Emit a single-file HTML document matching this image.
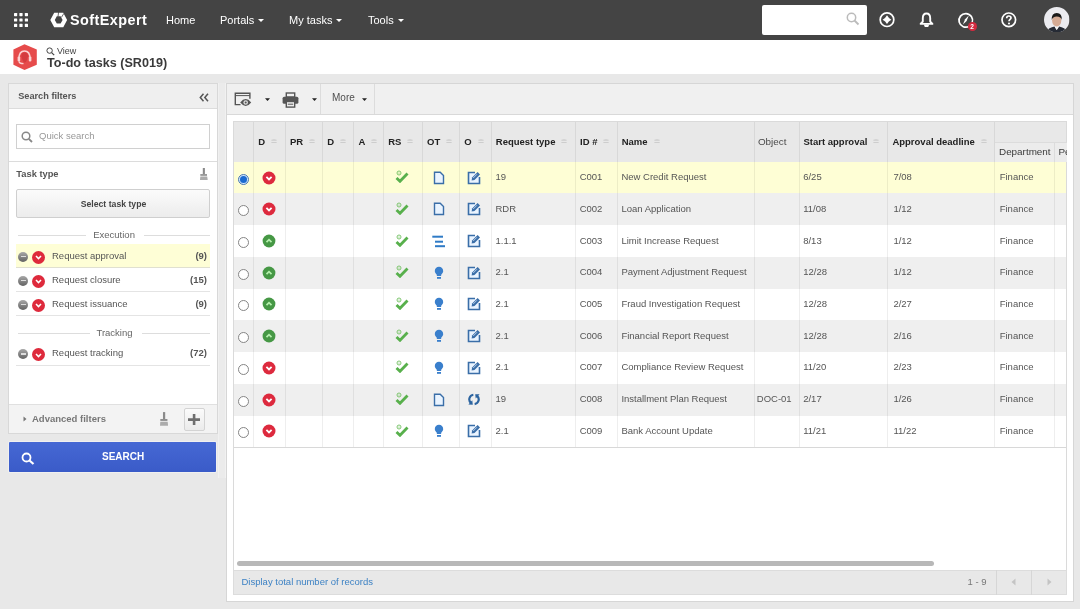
<!DOCTYPE html>
<html><head><meta charset="utf-8">
<style>
*{box-sizing:border-box;margin:0;padding:0}
html,body{width:1080px;height:609px;overflow:hidden}
body{background:#e8e8e8;font-family:"Liberation Sans",sans-serif;color:#555;font-size:9.5px;position:relative}
.abs{position:absolute}
#nav{left:0;top:0;width:1080px;height:40px;background:#444}
#nav .mi{position:absolute;top:13px;color:#fff;font-size:11px;line-height:14px}
.caret{display:inline-block;width:0;height:0;border-left:3.5px solid transparent;border-right:3.5px solid transparent;border-top:3.5px solid #fff;vertical-align:middle;margin-left:4px;margin-top:-2px}
#hdr{left:0;top:40px;width:1080px;height:34px;background:#fff}
.panel{background:#fff;border:1px solid #d8d8d8}
</style></head><body>
<div id="root" style="position:absolute;left:0;top:0;width:1080px;height:609px;will-change:transform">
<div id="nav" class="abs">
  <!-- grid icon -->
  <svg class="abs" style="left:13px;top:11.5px" width="16" height="16" viewBox="0 0 16 16">
    <g fill="#fff">
      <rect x="1" y="1" width="3.2" height="3.2" rx=".6"/><rect x="6.4" y="1" width="3.2" height="3.2" rx=".6"/><rect x="11.8" y="1" width="3.2" height="3.2" rx=".6"/>
      <rect x="1" y="6.4" width="3.2" height="3.2" rx=".6"/><rect x="6.4" y="6.4" width="3.2" height="3.2" rx=".6"/><rect x="11.8" y="6.4" width="3.2" height="3.2" rx=".6"/>
      <rect x="1" y="11.8" width="3.2" height="3.2" rx=".6"/><rect x="6.4" y="11.8" width="3.2" height="3.2" rx=".6"/><rect x="11.8" y="11.8" width="3.2" height="3.2" rx=".6"/>
    </g>
  </svg>
  <!-- logo -->
  <svg class="abs" style="left:49px;top:11px" width="19" height="18" viewBox="0 0 19 18">
    <path d="M5.2 1.7 L14.3 1.7 L18.1 9 L14.3 16.3 L5.2 16.3 L1.3 9 Z M7.8 5.2 L5.8 8.9 L7.8 12.5 L11.6 12.5 L13.6 8.9 L11.6 5.2 Z" fill="#fff" fill-rule="evenodd"/>
    <path d="M9.6 1 L9 5.6 M14.9 2.4 L12.4 6.4" stroke="#444" stroke-width="0.8"/>
  </svg>
  <div class="abs" style="left:70px;top:12.3px;color:#fff;font-weight:bold;font-size:14.4px;line-height:17px;letter-spacing:0.45px">SoftExpert</div>
  <div class="mi" style="left:166px">Home</div>
  <div class="mi" style="left:220px">Portals<span class="caret"></span></div>
  <div class="mi" style="left:289px">My tasks<span class="caret"></span></div>
  <div class="mi" style="left:368px">Tools<span class="caret"></span></div>
  <!-- search box -->
  <div class="abs" style="left:762px;top:5px;width:105px;height:30px;background:#fff;border-radius:2px"></div>
  <svg class="abs" style="left:846px;top:12px" width="14" height="14" viewBox="0 0 14 14"><circle cx="5.5" cy="5.5" r="4.2" fill="none" stroke="#bbb" stroke-width="1.5"/><path d="M8.5 8.5 L12.5 12.5" stroke="#bbb" stroke-width="1.8"/></svg>
  <!-- icons -->
  <svg class="abs" style="left:878px;top:11px" width="18" height="18" viewBox="0 0 18 18"><circle cx="9" cy="8.7" r="6.8" fill="none" stroke="#fff" stroke-width="1.7"/><path d="M9 4.3 Q10.5 7.2 13.4 8.7 Q10.5 10.2 9 13.1 Q7.5 10.2 4.6 8.7 Q7.5 7.2 9 4.3 Z" fill="#fff"/></svg>
  <svg class="abs" style="left:918px;top:11px" width="17" height="18" viewBox="0 0 17 18"><path d="M8.5 2.5 C5.7 2.5 4.8 4.6 4.8 7.2 L4.8 10.5 L2.6 12.9 L14.4 12.9 L12.2 10.5 L12.2 7.2 C12.2 4.6 11.3 2.5 8.5 2.5 Z" fill="none" stroke="#fff" stroke-width="1.9" stroke-linejoin="round"/><path d="M5.8 13.5 L11.2 13.5 L10.2 16 L6.8 16 Z" fill="#fff"/></svg>
  <svg class="abs" style="left:957px;top:10.5px" width="18" height="18" viewBox="0 0 18 18"><path d="M12.3 15.2 A6.8 6.8 0 1 1 15.2 11.6" fill="none" stroke="#fff" stroke-width="1.7"/><path d="M11.8 4.5 L9.6 9.9 L5.9 13.5 L8.1 8.2 Z" fill="#fff"/></svg>
  <div class="abs" style="left:967.5px;top:21.8px;width:9px;height:9px;border-radius:50%;background:#d42a3f;color:#fff;font-size:6.5px;font-weight:bold;line-height:9px;text-align:center">2</div>
  <svg class="abs" style="left:1000px;top:10.5px" width="18" height="18" viewBox="0 0 18 18"><circle cx="8.8" cy="8.8" r="6.8" fill="none" stroke="#fff" stroke-width="1.7"/><path d="M6.7 7.2 C6.7 5.8 7.6 5 8.8 5 C10.1 5 11 5.8 11 6.9 C11 8.3 9 8.6 9 10.2" fill="none" stroke="#fff" stroke-width="1.7"/><circle cx="9" cy="12.5" r="1.05" fill="#fff"/></svg>
  <svg class="abs" style="left:1044.3px;top:6.6px" width="25.5" height="25.5" viewBox="0 0 25.5 25.5">
    <defs><clipPath id="av"><circle cx="12.75" cy="12.75" r="12.75"/></clipPath></defs>
    <g clip-path="url(#av)">
      <rect width="25.5" height="25.5" fill="#ebebf0"/>
      <path d="M3 25.5 L5 21.5 Q8 20 10.5 19.5 L12.7 23 L15 19.5 Q17.5 20 20.5 21.5 L22.5 25.5 Z" fill="#262b35"/>
      <path d="M10.5 19.5 L12.7 23 L15 19.5 Z" fill="#f4f4f4"/>
      <ellipse cx="12.7" cy="13.6" rx="4.6" ry="6" fill="#d5ab95"/>
      <path d="M7.7 13 Q7.3 6.2 12.8 6 Q18.2 6.2 17.8 13 Q17 9.6 12.8 9.4 Q8.6 9.6 7.7 13 Z" fill="#1a1a1a"/>
    </g>
  </svg>
</div>

<div id="hdr" class="abs">
  <svg class="abs" style="left:12px;top:4px" width="26" height="28" viewBox="0 0 26 28">
    <path d="M12.5 0.2 L24.8 5.4 L24.8 20.7 L12.5 26.1 L1.4 20.7 L1.4 5.4 Z" fill="#e64b4b"/>
    <path d="M12.7 8.5 C10 8.5 8.6 10.5 9.8 14 C10.5 16.5 11.5 18.5 12.7 18.5 C13.9 18.5 14.9 16.5 15.6 14 C16.8 10.5 15.4 8.5 12.7 8.5 Z" fill="#d43c3f"/>
    <path d="M7 14.5 C7 9.5 9.3 7 12.5 7 C15.7 7 18 9.5 18 14.5" fill="none" stroke="#fbd3d3" stroke-width="1.5"/>
    <rect x="5.6" y="12.5" width="2.6" height="5" rx="1" fill="#fbd3d3"/>
    <rect x="16.8" y="12.5" width="2.6" height="5" rx="1" fill="#fbd3d3"/>
    <path d="M7 17.5 Q7.5 19.6 11.5 19.6" fill="none" stroke="#fbd3d3" stroke-width="1.3"/>
  </svg>
  <svg class="abs" style="left:46px;top:6.7px" width="9" height="9" viewBox="0 0 9 9"><circle cx="3.6" cy="3.6" r="2.7" fill="none" stroke="#444" stroke-width="1"/><path d="M5.6 5.6 L8.2 8.2" stroke="#444" stroke-width="1.2"/></svg>
  <div class="abs" style="left:57px;top:5.7px;font-size:9px;line-height:11px;color:#444">View</div>
  <div class="abs" style="left:47px;top:15.5px;font-size:12.6px;line-height:15px;font-weight:bold;color:#3a3a3a">To-do tasks (SR019)</div>
</div>

<!-- left panel -->
<div class="abs panel" style="left:8px;top:83px;width:210px;height:351px;">
  <div class="abs" style="left:0;top:0;width:208px;height:25px;background:#efefef;border-bottom:1px solid #dcdcdc"></div>
  <div class="abs b" style="left:9.2px;top:6.2px;font-size:9.2px;line-height:12px;font-weight:bold;color:#555">Search filters</div>
  <svg class="abs" style="left:189.5px;top:8.6px" width="10" height="9" viewBox="0 0 10 9"><path d="M4.5 0.8 L1.3 4.5 L4.5 8.2 M9 0.8 L5.8 4.5 L9 8.2" fill="none" stroke="#555" stroke-width="1.5"/></svg>
  <div class="abs" style="left:7px;top:39.5px;width:194px;height:25px;border:1px solid #d0d0d0;background:#fff"></div>
  <svg class="abs" style="left:12px;top:47px" width="13" height="12" viewBox="0 0 13 12"><circle cx="5" cy="5" r="3.8" fill="none" stroke="#888" stroke-width="1.5"/><path d="M7.8 7.8 L11 11" stroke="#888" stroke-width="1.8"/></svg>
  <div class="abs" style="left:30px;top:46px;font-size:9.5px;line-height:12px;color:#999">Quick search</div>
  <div class="abs" style="left:0;top:77px;width:208px;height:1px;background:#dcdcdc"></div>
  <div class="abs" style="left:7.3px;top:84.2px;font-size:9.3px;line-height:12px;font-weight:bold;color:#555">Task type</div>
  <svg class="abs" style="left:191px;top:84px" width="8" height="12" viewBox="0 0 8 12"><rect x="2.8" y="0" width="2.1" height="6.1" fill="#8a8a8a"/><rect x="0.3" y="6.1" width="6.7" height="1.7" fill="#8f8f8f"/><path d="M0.3 8.4 L7.2 8.4 L7.7 11.9 L0 11.9 Z" fill="#acacac"/></svg>
  <div class="abs" style="left:7px;top:105px;width:194px;height:29px;border:1px solid #cfcfcf;border-radius:2px;background:linear-gradient(#fbfbfb,#ececec)"></div>
  <div class="abs" style="left:0;top:113.5px;width:209px;text-align:center;font-size:8.7px;line-height:12px;font-weight:bold;color:#444">Select task type</div>
  <div class="abs" style="left:9px;top:151px;width:68px;height:1px;background:#ddd"></div>
  <div class="abs" style="left:135px;top:151px;width:66px;height:1px;background:#ddd"></div>
  <div class="abs" style="left:0.6px;top:145.2px;width:209px;text-align:center;font-size:9.5px;line-height:12px;color:#666">Execution</div>
  <div class="abs" style="left:7px;top:160px;width:194px;height:23.5px;background:#fefed6;border-bottom:1px solid #e0e0d0"></div>
  <div class="abs" style="left:7px;top:183.5px;width:194px;height:24px;border-bottom:1px solid #e4e4e4"></div>
  <div class="abs" style="left:7px;top:207.5px;width:194px;height:24px;border-bottom:1px solid #e4e4e4"></div>
  <div class="abs" style="left:1px;top:243px;width:209px;text-align:center;font-size:9.5px;line-height:12px;color:#666">Tracking</div>
  <div class="abs" style="left:9px;top:248.5px;width:72px;height:1px;background:#ddd"></div>
  <div class="abs" style="left:133px;top:248.5px;width:68px;height:1px;background:#ddd"></div>
  <div class="abs" style="left:7px;top:258px;width:194px;height:24px;border-bottom:1px solid #e4e4e4"></div>
  <div class="abs" style="left:9px;top:167.8px;width:10px;height:10px;border-radius:50%;background:linear-gradient(#a8a8a8,#626262)"></div>
  <div class="abs" style="left:11.5px;top:171.9px;width:5px;height:1.3px;background:#ddd"></div>
  <div class="abs" style="left:23px;top:166.6px;width:13px;height:13px;border-radius:50%;background:#de2a3c"></div>
  <svg class="abs" style="left:26px;top:171.1px" width="7" height="5" viewBox="0 0 7 5"><path d="M1 1 L3.5 3.6 L6 1" fill="none" stroke="#fff" stroke-width="1.5"/></svg>
  <div class="abs" style="left:43px;top:165.8px;font-size:9.5px;line-height:12px;color:#555">Request approval</div>
  <div class="abs" style="left:150px;width:48px;text-align:right;top:165.8px;font-size:9.5px;line-height:12px;font-weight:bold;color:#555">(9)</div>
  <div class="abs" style="left:9px;top:191.8px;width:10px;height:10px;border-radius:50%;background:linear-gradient(#a8a8a8,#626262)"></div>
  <div class="abs" style="left:11.5px;top:195.9px;width:5px;height:1.3px;background:#ddd"></div>
  <div class="abs" style="left:23px;top:190.6px;width:13px;height:13px;border-radius:50%;background:#de2a3c"></div>
  <svg class="abs" style="left:26px;top:195.1px" width="7" height="5" viewBox="0 0 7 5"><path d="M1 1 L3.5 3.6 L6 1" fill="none" stroke="#fff" stroke-width="1.5"/></svg>
  <div class="abs" style="left:43px;top:189.8px;font-size:9.5px;line-height:12px;color:#555">Request closure</div>
  <div class="abs" style="left:150px;width:48px;text-align:right;top:189.8px;font-size:9.5px;line-height:12px;font-weight:bold;color:#555">(15)</div>
  <div class="abs" style="left:9px;top:215.8px;width:10px;height:10px;border-radius:50%;background:linear-gradient(#a8a8a8,#626262)"></div>
  <div class="abs" style="left:11.5px;top:219.9px;width:5px;height:1.3px;background:#ddd"></div>
  <div class="abs" style="left:23px;top:214.6px;width:13px;height:13px;border-radius:50%;background:#de2a3c"></div>
  <svg class="abs" style="left:26px;top:219.1px" width="7" height="5" viewBox="0 0 7 5"><path d="M1 1 L3.5 3.6 L6 1" fill="none" stroke="#fff" stroke-width="1.5"/></svg>
  <div class="abs" style="left:43px;top:213.8px;font-size:9.5px;line-height:12px;color:#555">Request issuance</div>
  <div class="abs" style="left:150px;width:48px;text-align:right;top:213.8px;font-size:9.5px;line-height:12px;font-weight:bold;color:#555">(9)</div>
  <div class="abs" style="left:9px;top:265.2px;width:10px;height:10px;border-radius:50%;background:linear-gradient(#a8a8a8,#626262)"></div>
  <div class="abs" style="left:11.5px;top:269.4px;width:5px;height:1.3px;background:#ddd"></div>
  <div class="abs" style="left:23px;top:264.1px;width:13px;height:13px;border-radius:50%;background:#de2a3c"></div>
  <svg class="abs" style="left:26px;top:268.6px" width="7" height="5" viewBox="0 0 7 5"><path d="M1 1 L3.5 3.6 L6 1" fill="none" stroke="#fff" stroke-width="1.5"/></svg>
  <div class="abs" style="left:43px;top:263.2px;font-size:9.5px;line-height:12px;color:#555">Request tracking</div>
  <div class="abs" style="left:150px;width:48px;text-align:right;top:263.2px;font-size:9.5px;line-height:12px;font-weight:bold;color:#555">(72)</div>
  
  <div class="abs" style="left:0;top:319.5px;width:208px;height:29.5px;background:#f3f3f3;border-top:1px solid #e0e0e0"></div>
  <svg class="abs" style="left:14px;top:332px" width="4" height="6" viewBox="0 0 4 6"><path d="M0.5 0.5 L3.5 3 L0.5 5.5 Z" fill="#777"/></svg>
  <div class="abs" style="left:23px;top:329px;font-size:9.5px;line-height:12px;font-weight:bold;color:#777">Advanced filters</div>
  <svg class="abs" style="left:150.8px;top:327.8px" width="8.5" height="14" viewBox="0 0 8 13"><rect x="2.8" y="0" width="2.1" height="6.5" fill="#8a8a8a"/><rect x="0.3" y="6.5" width="6.7" height="1.8" fill="#8f8f8f"/><path d="M0.3 9 L7.2 9 L7.7 12.9 L0 12.9 Z" fill="#acacac"/></svg>
  <div class="abs" style="left:174.5px;top:324.2px;width:21.5px;height:22.5px;border:1px solid #d3d3d3;border-radius:2px;background:linear-gradient(#fbfbfb,#ebebeb)"></div>
  <svg class="abs" style="left:179px;top:329.8px" width="12.2" height="11.2" viewBox="0 0 12.2 11.2"><path d="M6.1 0 L6.1 11.2 M0 5.6 L12.2 5.6" stroke="#6f6f6f" stroke-width="2.6"/></svg>
</div>
<div class="abs" style="left:8.8px;top:442.3px;width:207.4px;height:29.8px;background:linear-gradient(#4668d4,#3a5bc8);border-radius:1px;box-shadow:0 0 0 1px rgba(255,255,255,.35)"></div>
<svg class="abs" style="left:21px;top:452px" width="14" height="13" viewBox="0 0 14 13"><circle cx="5.5" cy="5.5" r="4" fill="none" stroke="#fff" stroke-width="1.8"/><path d="M8.5 8.5 L12.5 12" stroke="#fff" stroke-width="2.2"/></svg>
<div class="abs" style="left:102px;top:451px;font-size:10px;line-height:12px;font-weight:bold;color:#fff">SEARCH</div>

<!-- right panel -->
<div class="abs" style="left:218px;top:83px;width:8px;height:395px;background:#ebebeb;border-left:1px solid #f0f0f0;border-right:1px solid #f1f1f1"></div>
<div class="abs" style="left:226px;top:83px;width:848px;height:519px;background:#fff;border:1px solid #d6d6d6"></div>
<div class="abs" style="left:227px;top:84px;width:846px;height:30.5px;background:#f0f0f0;border-bottom:1px solid #d9d9d9"></div>
<div class="abs" style="left:320px;top:84px;width:1px;height:30px;background:#dcdcdc"></div>
<div class="abs" style="left:374.3px;top:84px;width:1px;height:30px;background:#dcdcdc"></div>
<svg class="abs" style="left:234px;top:92px" width="18" height="15" viewBox="0 0 18 15"><path d="M6.5 12.6 L1.3 12.6 L1.3 1.2 L15.9 1.2 L15.9 6.8" fill="none" stroke="#555" stroke-width="1.4"/><path d="M1.3 3.6 L15.9 3.6" stroke="#555" stroke-width="1"/><path d="M6.2 10.5 Q11.7 3.6 17.2 10.5 Q11.7 17.4 6.2 10.5 Z" fill="#555"/><circle cx="11.7" cy="10.5" r="2.3" fill="#dedede"/><circle cx="11.7" cy="10.5" r="1" fill="#555"/></svg>
<svg class="abs" style="left:264.7px;top:97.7px" width="5" height="3" viewBox="0 0 5 3"><path d="M0 0.2 L5 0.2 L2.5 3 Z" fill="#222"/></svg>
<svg class="abs" style="left:282px;top:92px" width="17" height="16" viewBox="0 0 17 16"><rect x="4.3" y="1" width="8.4" height="4" fill="none" stroke="#555" stroke-width="1.4"/><rect x="0.6" y="4.8" width="15.8" height="7" rx="1.5" fill="#555"/><rect x="4.3" y="9.5" width="8.4" height="5.6" fill="#eee" stroke="#555" stroke-width="1.4"/><rect x="5.8" y="11.7" width="5.4" height="1" fill="#555"/></svg>
<svg class="abs" style="left:311.8px;top:97.7px" width="5" height="3" viewBox="0 0 5 3"><path d="M0 0.2 L5 0.2 L2.5 3 Z" fill="#222"/></svg>
<div class="abs" style="left:332px;top:92.2px;font-size:10px;line-height:12px;color:#505050">More</div>
<svg class="abs" style="left:361.5px;top:97.5px" width="5" height="3" viewBox="0 0 5 3"><path d="M0 0.2 L5 0.2 L2.5 3 Z" fill="#222"/></svg>
<div class="abs" style="left:233px;top:121px;width:834px;height:448.5px;background:#fff;border:1px solid #dadada;border-bottom:none"></div>
<div class="abs" style="left:234px;top:122px;width:832px;height:39.7px;background:#e8e8e8"></div>
<div class="abs" style="left:994.5px;top:141.5px;width:72px;height:20.2px;background:#ececec;border-top:1px solid #dcdcdc"></div>
<div class="abs" style="left:234px;top:161.7px;width:832px;height:31.73px;background:#fefed5"></div>
<div class="abs" style="left:234px;top:193.43px;width:832px;height:31.73px;background:#efefef"></div>
<div class="abs" style="left:234px;top:225.16px;width:832px;height:31.73px;background:#fff"></div>
<div class="abs" style="left:234px;top:256.89px;width:832px;height:31.73px;background:#efefef"></div>
<div class="abs" style="left:234px;top:288.62px;width:832px;height:31.73px;background:#fff"></div>
<div class="abs" style="left:234px;top:320.35px;width:832px;height:31.73px;background:#efefef"></div>
<div class="abs" style="left:234px;top:352.08px;width:832px;height:31.73px;background:#fff"></div>
<div class="abs" style="left:234px;top:383.81px;width:832px;height:31.73px;background:#efefef"></div>
<div class="abs" style="left:234px;top:415.54px;width:832px;height:31.73px;background:#fff"></div>
<div class="abs" style="left:234px;top:447.27px;width:832px;height:1px;background:#d8d8d8"></div>
<div class="abs" style="left:253.3px;top:122px;width:1px;height:325.27px;background:rgba(0,0,0,0.065)"></div>
<div class="abs" style="left:285px;top:122px;width:1px;height:325.27px;background:rgba(0,0,0,0.065)"></div>
<div class="abs" style="left:322.3px;top:122px;width:1px;height:325.27px;background:rgba(0,0,0,0.065)"></div>
<div class="abs" style="left:353.4px;top:122px;width:1px;height:325.27px;background:rgba(0,0,0,0.065)"></div>
<div class="abs" style="left:383.2px;top:122px;width:1px;height:325.27px;background:rgba(0,0,0,0.065)"></div>
<div class="abs" style="left:422px;top:122px;width:1px;height:325.27px;background:rgba(0,0,0,0.065)"></div>
<div class="abs" style="left:459.2px;top:122px;width:1px;height:325.27px;background:rgba(0,0,0,0.065)"></div>
<div class="abs" style="left:490.8px;top:122px;width:1px;height:325.27px;background:rgba(0,0,0,0.065)"></div>
<div class="abs" style="left:575px;top:122px;width:1px;height:325.27px;background:rgba(0,0,0,0.065)"></div>
<div class="abs" style="left:616.7px;top:122px;width:1px;height:325.27px;background:rgba(0,0,0,0.065)"></div>
<div class="abs" style="left:753.6px;top:122px;width:1px;height:325.27px;background:rgba(0,0,0,0.065)"></div>
<div class="abs" style="left:798.5px;top:122px;width:1px;height:325.27px;background:rgba(0,0,0,0.065)"></div>
<div class="abs" style="left:887.4px;top:122px;width:1px;height:325.27px;background:rgba(0,0,0,0.065)"></div>
<div class="abs" style="left:994px;top:122px;width:1px;height:325.27px;background:rgba(0,0,0,0.065)"></div>
<div class="abs" style="left:1053.8px;top:142.5px;width:1px;height:304.77px;background:rgba(0,0,0,0.065)"></div>
<div class="abs" style="left:258.3px;top:135.7px;font-size:9.5px;line-height:12px;font-weight:bold;color:#222;white-space:nowrap">D<svg style="margin-left:6px;vertical-align:0.5px" width="6" height="5" viewBox="0 0 6 5"><path d="M0.4 1.3 Q3 -0.2 5.6 1.3 Z" fill="#c2c2c2"/><path d="M0.4 3.2 Q3 4.7 5.6 3.2 Z" fill="#c2c2c2"/><rect x="0.4" y="0.7" width="5.2" height="1" fill="#cdcdcd"/><rect x="0.4" y="3" width="5.2" height="1" fill="#cdcdcd"/></svg></div>
<div class="abs" style="left:290px;top:135.7px;font-size:9.5px;line-height:12px;font-weight:bold;color:#222;white-space:nowrap">PR<svg style="margin-left:6px;vertical-align:0.5px" width="6" height="5" viewBox="0 0 6 5"><path d="M0.4 1.3 Q3 -0.2 5.6 1.3 Z" fill="#c2c2c2"/><path d="M0.4 3.2 Q3 4.7 5.6 3.2 Z" fill="#c2c2c2"/><rect x="0.4" y="0.7" width="5.2" height="1" fill="#cdcdcd"/><rect x="0.4" y="3" width="5.2" height="1" fill="#cdcdcd"/></svg></div>
<div class="abs" style="left:327.3px;top:135.7px;font-size:9.5px;line-height:12px;font-weight:bold;color:#222;white-space:nowrap">D<svg style="margin-left:6px;vertical-align:0.5px" width="6" height="5" viewBox="0 0 6 5"><path d="M0.4 1.3 Q3 -0.2 5.6 1.3 Z" fill="#c2c2c2"/><path d="M0.4 3.2 Q3 4.7 5.6 3.2 Z" fill="#c2c2c2"/><rect x="0.4" y="0.7" width="5.2" height="1" fill="#cdcdcd"/><rect x="0.4" y="3" width="5.2" height="1" fill="#cdcdcd"/></svg></div>
<div class="abs" style="left:358.4px;top:135.7px;font-size:9.5px;line-height:12px;font-weight:bold;color:#222;white-space:nowrap">A<svg style="margin-left:6px;vertical-align:0.5px" width="6" height="5" viewBox="0 0 6 5"><path d="M0.4 1.3 Q3 -0.2 5.6 1.3 Z" fill="#c2c2c2"/><path d="M0.4 3.2 Q3 4.7 5.6 3.2 Z" fill="#c2c2c2"/><rect x="0.4" y="0.7" width="5.2" height="1" fill="#cdcdcd"/><rect x="0.4" y="3" width="5.2" height="1" fill="#cdcdcd"/></svg></div>
<div class="abs" style="left:388.2px;top:135.7px;font-size:9.5px;line-height:12px;font-weight:bold;color:#222;white-space:nowrap">RS<svg style="margin-left:6px;vertical-align:0.5px" width="6" height="5" viewBox="0 0 6 5"><path d="M0.4 1.3 Q3 -0.2 5.6 1.3 Z" fill="#c2c2c2"/><path d="M0.4 3.2 Q3 4.7 5.6 3.2 Z" fill="#c2c2c2"/><rect x="0.4" y="0.7" width="5.2" height="1" fill="#cdcdcd"/><rect x="0.4" y="3" width="5.2" height="1" fill="#cdcdcd"/></svg></div>
<div class="abs" style="left:427px;top:135.7px;font-size:9.5px;line-height:12px;font-weight:bold;color:#222;white-space:nowrap">OT<svg style="margin-left:6px;vertical-align:0.5px" width="6" height="5" viewBox="0 0 6 5"><path d="M0.4 1.3 Q3 -0.2 5.6 1.3 Z" fill="#c2c2c2"/><path d="M0.4 3.2 Q3 4.7 5.6 3.2 Z" fill="#c2c2c2"/><rect x="0.4" y="0.7" width="5.2" height="1" fill="#cdcdcd"/><rect x="0.4" y="3" width="5.2" height="1" fill="#cdcdcd"/></svg></div>
<div class="abs" style="left:464.2px;top:135.7px;font-size:9.5px;line-height:12px;font-weight:bold;color:#222;white-space:nowrap">O<svg style="margin-left:6px;vertical-align:0.5px" width="6" height="5" viewBox="0 0 6 5"><path d="M0.4 1.3 Q3 -0.2 5.6 1.3 Z" fill="#c2c2c2"/><path d="M0.4 3.2 Q3 4.7 5.6 3.2 Z" fill="#c2c2c2"/><rect x="0.4" y="0.7" width="5.2" height="1" fill="#cdcdcd"/><rect x="0.4" y="3" width="5.2" height="1" fill="#cdcdcd"/></svg></div>
<div class="abs" style="left:495.8px;top:135.7px;font-size:9.5px;line-height:12px;font-weight:bold;color:#222;white-space:nowrap">Request type<svg style="margin-left:6px;vertical-align:0.5px" width="6" height="5" viewBox="0 0 6 5"><path d="M0.4 1.3 Q3 -0.2 5.6 1.3 Z" fill="#c2c2c2"/><path d="M0.4 3.2 Q3 4.7 5.6 3.2 Z" fill="#c2c2c2"/><rect x="0.4" y="0.7" width="5.2" height="1" fill="#cdcdcd"/><rect x="0.4" y="3" width="5.2" height="1" fill="#cdcdcd"/></svg></div>
<div class="abs" style="left:580px;top:135.7px;font-size:9.5px;line-height:12px;font-weight:bold;color:#222;white-space:nowrap">ID #<svg style="margin-left:6px;vertical-align:0.5px" width="6" height="5" viewBox="0 0 6 5"><path d="M0.4 1.3 Q3 -0.2 5.6 1.3 Z" fill="#c2c2c2"/><path d="M0.4 3.2 Q3 4.7 5.6 3.2 Z" fill="#c2c2c2"/><rect x="0.4" y="0.7" width="5.2" height="1" fill="#cdcdcd"/><rect x="0.4" y="3" width="5.2" height="1" fill="#cdcdcd"/></svg></div>
<div class="abs" style="left:621.7px;top:135.7px;font-size:9.5px;line-height:12px;font-weight:bold;color:#222;white-space:nowrap">Name<svg style="margin-left:6px;vertical-align:0.5px" width="6" height="5" viewBox="0 0 6 5"><path d="M0.4 1.3 Q3 -0.2 5.6 1.3 Z" fill="#c2c2c2"/><path d="M0.4 3.2 Q3 4.7 5.6 3.2 Z" fill="#c2c2c2"/><rect x="0.4" y="0.7" width="5.2" height="1" fill="#cdcdcd"/><rect x="0.4" y="3" width="5.2" height="1" fill="#cdcdcd"/></svg></div>
<div class="abs" style="left:757.9px;top:135.6px;font-size:9.9px;line-height:12px;color:#4a4a4a">Object</div>
<div class="abs" style="left:803.5px;top:135.7px;font-size:9.5px;line-height:12px;font-weight:bold;color:#222;white-space:nowrap">Start approval<svg style="margin-left:6px;vertical-align:0.5px" width="6" height="5" viewBox="0 0 6 5"><path d="M0.4 1.3 Q3 -0.2 5.6 1.3 Z" fill="#c2c2c2"/><path d="M0.4 3.2 Q3 4.7 5.6 3.2 Z" fill="#c2c2c2"/><rect x="0.4" y="0.7" width="5.2" height="1" fill="#cdcdcd"/><rect x="0.4" y="3" width="5.2" height="1" fill="#cdcdcd"/></svg></div>
<div class="abs" style="left:892.4px;top:135.7px;font-size:9.5px;line-height:12px;font-weight:bold;color:#222;white-space:nowrap">Approval deadline<svg style="margin-left:6px;vertical-align:0.5px" width="6" height="5" viewBox="0 0 6 5"><path d="M0.4 1.3 Q3 -0.2 5.6 1.3 Z" fill="#c2c2c2"/><path d="M0.4 3.2 Q3 4.7 5.6 3.2 Z" fill="#c2c2c2"/><rect x="0.4" y="0.7" width="5.2" height="1" fill="#cdcdcd"/><rect x="0.4" y="3" width="5.2" height="1" fill="#cdcdcd"/></svg></div>
<div class="abs" style="left:999px;top:145.6px;font-size:9.9px;line-height:12px;color:#3a3a3a;white-space:nowrap;overflow:hidden;width:60px">Department</div>
<div class="abs" style="left:1058.5px;top:145.6px;font-size:9.9px;line-height:12px;color:#3a3a3a;white-space:nowrap;overflow:hidden;width:8.5px">Pe</div>
<div class="abs" style="left:238px;top:173.56px;width:11px;height:11px;border-radius:50%;border:1px solid #4a78b0;background:#cfe6ff"></div>
<div class="abs" style="left:240px;top:175.56px;width:7px;height:7px;border-radius:50%;background:#1a6ad0"></div>
<svg class="abs" style="left:261.5px;top:170.56px" width="14" height="14" viewBox="0 0 14 14"><circle cx="7" cy="7" r="6.5" fill="#dd2a3e"/><path d="M4.4 5.8 L7 8.4 L9.6 5.8" fill="none" stroke="#fff" stroke-width="1.8"/></svg>
<svg class="abs" style="left:395px;top:169.06px" width="14" height="14" viewBox="0 0 14 14"><circle cx="4" cy="4" r="2" fill="none" stroke="#72c060" stroke-width="0.9"/><circle cx="4" cy="4" r="0.6" fill="#72c060"/><path d="M1.5 9 L5 12.3 L12.5 4.5" fill="none" stroke="#58b04c" stroke-width="2.8"/></svg>
<svg class="abs" style="left:432.5px;top:170.56px" width="12" height="14" viewBox="0 0 12 14"><path d="M1.5 1.3 L7.2 1.3 L10.5 4.6 L10.5 12.5 L1.5 12.5 Z" fill="#eaf4ff" stroke="#3a6ea8" stroke-width="1.4" stroke-linejoin="miter"/></svg>
<svg class="abs" style="left:466.5px;top:170.56px" width="14" height="14" viewBox="0 0 14 14"><path d="M8 1.5 L1.5 1.5 L1.5 12.5 L12.5 12.5 L12.5 6" fill="#eaf4ff" stroke="#3a6ea8" stroke-width="1.6"/><path d="M4.6 9.6 L5.1 6.6 L10.6 1.1 L13 3.5 L7.5 9 Z" fill="#3a6ea8"/><path d="M6.2 7 L9.9 3.3" stroke="#eaf4ff" stroke-width="0.7"/></svg>
<div class="abs" style="left:495.5px;top:171.06px;font-size:9.5px;line-height:12px;color:#555">19</div>
<div class="abs" style="left:579.7px;top:171.06px;font-size:9.5px;line-height:12px;color:#555">C001</div>
<div class="abs" style="left:621.4px;top:171.06px;font-size:9.5px;line-height:12px;color:#555">New Credit Request</div>
<div class="abs" style="left:803.2px;top:171.06px;font-size:9.5px;line-height:12px;color:#555">6/25</div>
<div class="abs" style="left:893.4px;top:171.06px;font-size:9.5px;line-height:12px;color:#555">7/08</div>
<div class="abs" style="left:999.7px;top:171.06px;font-size:9.5px;line-height:12px;color:#555">Finance</div>
<div class="abs" style="left:238px;top:205.29px;width:11px;height:11px;border-radius:50%;border:1px solid #858585;background:#fff"></div>
<svg class="abs" style="left:261.5px;top:202.29px" width="14" height="14" viewBox="0 0 14 14"><circle cx="7" cy="7" r="6.5" fill="#dd2a3e"/><path d="M4.4 5.8 L7 8.4 L9.6 5.8" fill="none" stroke="#fff" stroke-width="1.8"/></svg>
<svg class="abs" style="left:395px;top:200.79px" width="14" height="14" viewBox="0 0 14 14"><circle cx="4" cy="4" r="2" fill="none" stroke="#72c060" stroke-width="0.9"/><circle cx="4" cy="4" r="0.6" fill="#72c060"/><path d="M1.5 9 L5 12.3 L12.5 4.5" fill="none" stroke="#58b04c" stroke-width="2.8"/></svg>
<svg class="abs" style="left:432.5px;top:202.29px" width="12" height="14" viewBox="0 0 12 14"><path d="M1.5 1.3 L7.2 1.3 L10.5 4.6 L10.5 12.5 L1.5 12.5 Z" fill="#eaf4ff" stroke="#3a6ea8" stroke-width="1.4" stroke-linejoin="miter"/></svg>
<svg class="abs" style="left:466.5px;top:202.29px" width="14" height="14" viewBox="0 0 14 14"><path d="M8 1.5 L1.5 1.5 L1.5 12.5 L12.5 12.5 L12.5 6" fill="#eaf4ff" stroke="#3a6ea8" stroke-width="1.6"/><path d="M4.6 9.6 L5.1 6.6 L10.6 1.1 L13 3.5 L7.5 9 Z" fill="#3a6ea8"/><path d="M6.2 7 L9.9 3.3" stroke="#eaf4ff" stroke-width="0.7"/></svg>
<div class="abs" style="left:495.5px;top:202.79px;font-size:9.5px;line-height:12px;color:#555">RDR</div>
<div class="abs" style="left:579.7px;top:202.79px;font-size:9.5px;line-height:12px;color:#555">C002</div>
<div class="abs" style="left:621.4px;top:202.79px;font-size:9.5px;line-height:12px;color:#555">Loan Application</div>
<div class="abs" style="left:803.2px;top:202.79px;font-size:9.5px;line-height:12px;color:#555">11/08</div>
<div class="abs" style="left:893.4px;top:202.79px;font-size:9.5px;line-height:12px;color:#555">1/12</div>
<div class="abs" style="left:999.7px;top:202.79px;font-size:9.5px;line-height:12px;color:#555">Finance</div>
<div class="abs" style="left:238px;top:237.03px;width:11px;height:11px;border-radius:50%;border:1px solid #858585;background:#fff"></div>
<svg class="abs" style="left:261.5px;top:234.03px" width="14" height="14" viewBox="0 0 14 14"><circle cx="7" cy="7" r="6.4" fill="#469845"/><path d="M4.5 8.2 L7 5.7 L9.5 8.2" fill="none" stroke="#b4f0ac" stroke-width="1.7"/></svg>
<svg class="abs" style="left:395px;top:232.53px" width="14" height="14" viewBox="0 0 14 14"><circle cx="4" cy="4" r="2" fill="none" stroke="#72c060" stroke-width="0.9"/><circle cx="4" cy="4" r="0.6" fill="#72c060"/><path d="M1.5 9 L5 12.3 L12.5 4.5" fill="none" stroke="#58b04c" stroke-width="2.8"/></svg>
<svg class="abs" style="left:430.9px;top:234.03px" width="14" height="14" viewBox="0 0 14 14"><g fill="#2f7bc6"><rect x="1.3" y="1.7" width="10.7" height="2"/><rect x="4" y="6.7" width="8" height="2"/><rect x="4" y="11.2" width="10.4" height="2"/></g></svg>
<svg class="abs" style="left:466.5px;top:234.03px" width="14" height="14" viewBox="0 0 14 14"><path d="M8 1.5 L1.5 1.5 L1.5 12.5 L12.5 12.5 L12.5 6" fill="#eaf4ff" stroke="#3a6ea8" stroke-width="1.6"/><path d="M4.6 9.6 L5.1 6.6 L10.6 1.1 L13 3.5 L7.5 9 Z" fill="#3a6ea8"/><path d="M6.2 7 L9.9 3.3" stroke="#eaf4ff" stroke-width="0.7"/></svg>
<div class="abs" style="left:495.5px;top:234.53px;font-size:9.5px;line-height:12px;color:#555">1.1.1</div>
<div class="abs" style="left:579.7px;top:234.53px;font-size:9.5px;line-height:12px;color:#555">C003</div>
<div class="abs" style="left:621.4px;top:234.53px;font-size:9.5px;line-height:12px;color:#555">Limit Increase Request</div>
<div class="abs" style="left:803.2px;top:234.53px;font-size:9.5px;line-height:12px;color:#555">8/13</div>
<div class="abs" style="left:893.4px;top:234.53px;font-size:9.5px;line-height:12px;color:#555">1/12</div>
<div class="abs" style="left:999.7px;top:234.53px;font-size:9.5px;line-height:12px;color:#555">Finance</div>
<div class="abs" style="left:238px;top:268.75px;width:11px;height:11px;border-radius:50%;border:1px solid #858585;background:#fff"></div>
<svg class="abs" style="left:261.5px;top:265.75px" width="14" height="14" viewBox="0 0 14 14"><circle cx="7" cy="7" r="6.4" fill="#469845"/><path d="M4.5 8.2 L7 5.7 L9.5 8.2" fill="none" stroke="#b4f0ac" stroke-width="1.7"/></svg>
<svg class="abs" style="left:395px;top:264.25px" width="14" height="14" viewBox="0 0 14 14"><circle cx="4" cy="4" r="2" fill="none" stroke="#72c060" stroke-width="0.9"/><circle cx="4" cy="4" r="0.6" fill="#72c060"/><path d="M1.5 9 L5 12.3 L12.5 4.5" fill="none" stroke="#58b04c" stroke-width="2.8"/></svg>
<svg class="abs" style="left:434px;top:265.75px" width="10" height="14" viewBox="0 0 10 14"><path d="M5 0.8 C7.4 0.8 9.2 2.6 9.2 4.9 C9.2 6.6 8 7.6 7.3 8.6 L7.1 10 L2.9 10 L2.7 8.6 C2 7.6 0.8 6.6 0.8 4.9 C0.8 2.6 2.6 0.8 5 0.8 Z" fill="#3a7fcc"/><rect x="3" y="11" width="4" height="1.8" fill="#3a7fcc"/></svg>
<svg class="abs" style="left:466.5px;top:265.75px" width="14" height="14" viewBox="0 0 14 14"><path d="M8 1.5 L1.5 1.5 L1.5 12.5 L12.5 12.5 L12.5 6" fill="#eaf4ff" stroke="#3a6ea8" stroke-width="1.6"/><path d="M4.6 9.6 L5.1 6.6 L10.6 1.1 L13 3.5 L7.5 9 Z" fill="#3a6ea8"/><path d="M6.2 7 L9.9 3.3" stroke="#eaf4ff" stroke-width="0.7"/></svg>
<div class="abs" style="left:495.5px;top:266.25px;font-size:9.5px;line-height:12px;color:#555">2.1</div>
<div class="abs" style="left:579.7px;top:266.25px;font-size:9.5px;line-height:12px;color:#555">C004</div>
<div class="abs" style="left:621.4px;top:266.25px;font-size:9.5px;line-height:12px;color:#555">Payment Adjustment Request</div>
<div class="abs" style="left:803.2px;top:266.25px;font-size:9.5px;line-height:12px;color:#555">12/28</div>
<div class="abs" style="left:893.4px;top:266.25px;font-size:9.5px;line-height:12px;color:#555">1/12</div>
<div class="abs" style="left:999.7px;top:266.25px;font-size:9.5px;line-height:12px;color:#555">Finance</div>
<div class="abs" style="left:238px;top:300.49px;width:11px;height:11px;border-radius:50%;border:1px solid #858585;background:#fff"></div>
<svg class="abs" style="left:261.5px;top:297.49px" width="14" height="14" viewBox="0 0 14 14"><circle cx="7" cy="7" r="6.4" fill="#469845"/><path d="M4.5 8.2 L7 5.7 L9.5 8.2" fill="none" stroke="#b4f0ac" stroke-width="1.7"/></svg>
<svg class="abs" style="left:395px;top:295.99px" width="14" height="14" viewBox="0 0 14 14"><circle cx="4" cy="4" r="2" fill="none" stroke="#72c060" stroke-width="0.9"/><circle cx="4" cy="4" r="0.6" fill="#72c060"/><path d="M1.5 9 L5 12.3 L12.5 4.5" fill="none" stroke="#58b04c" stroke-width="2.8"/></svg>
<svg class="abs" style="left:434px;top:297.49px" width="10" height="14" viewBox="0 0 10 14"><path d="M5 0.8 C7.4 0.8 9.2 2.6 9.2 4.9 C9.2 6.6 8 7.6 7.3 8.6 L7.1 10 L2.9 10 L2.7 8.6 C2 7.6 0.8 6.6 0.8 4.9 C0.8 2.6 2.6 0.8 5 0.8 Z" fill="#3a7fcc"/><rect x="3" y="11" width="4" height="1.8" fill="#3a7fcc"/></svg>
<svg class="abs" style="left:466.5px;top:297.49px" width="14" height="14" viewBox="0 0 14 14"><path d="M8 1.5 L1.5 1.5 L1.5 12.5 L12.5 12.5 L12.5 6" fill="#eaf4ff" stroke="#3a6ea8" stroke-width="1.6"/><path d="M4.6 9.6 L5.1 6.6 L10.6 1.1 L13 3.5 L7.5 9 Z" fill="#3a6ea8"/><path d="M6.2 7 L9.9 3.3" stroke="#eaf4ff" stroke-width="0.7"/></svg>
<div class="abs" style="left:495.5px;top:297.99px;font-size:9.5px;line-height:12px;color:#555">2.1</div>
<div class="abs" style="left:579.7px;top:297.99px;font-size:9.5px;line-height:12px;color:#555">C005</div>
<div class="abs" style="left:621.4px;top:297.99px;font-size:9.5px;line-height:12px;color:#555">Fraud Investigation Request</div>
<div class="abs" style="left:803.2px;top:297.99px;font-size:9.5px;line-height:12px;color:#555">12/28</div>
<div class="abs" style="left:893.4px;top:297.99px;font-size:9.5px;line-height:12px;color:#555">2/27</div>
<div class="abs" style="left:999.7px;top:297.99px;font-size:9.5px;line-height:12px;color:#555">Finance</div>
<div class="abs" style="left:238px;top:332.22px;width:11px;height:11px;border-radius:50%;border:1px solid #858585;background:#fff"></div>
<svg class="abs" style="left:261.5px;top:329.22px" width="14" height="14" viewBox="0 0 14 14"><circle cx="7" cy="7" r="6.4" fill="#469845"/><path d="M4.5 8.2 L7 5.7 L9.5 8.2" fill="none" stroke="#b4f0ac" stroke-width="1.7"/></svg>
<svg class="abs" style="left:395px;top:327.72px" width="14" height="14" viewBox="0 0 14 14"><circle cx="4" cy="4" r="2" fill="none" stroke="#72c060" stroke-width="0.9"/><circle cx="4" cy="4" r="0.6" fill="#72c060"/><path d="M1.5 9 L5 12.3 L12.5 4.5" fill="none" stroke="#58b04c" stroke-width="2.8"/></svg>
<svg class="abs" style="left:434px;top:329.22px" width="10" height="14" viewBox="0 0 10 14"><path d="M5 0.8 C7.4 0.8 9.2 2.6 9.2 4.9 C9.2 6.6 8 7.6 7.3 8.6 L7.1 10 L2.9 10 L2.7 8.6 C2 7.6 0.8 6.6 0.8 4.9 C0.8 2.6 2.6 0.8 5 0.8 Z" fill="#3a7fcc"/><rect x="3" y="11" width="4" height="1.8" fill="#3a7fcc"/></svg>
<svg class="abs" style="left:466.5px;top:329.22px" width="14" height="14" viewBox="0 0 14 14"><path d="M8 1.5 L1.5 1.5 L1.5 12.5 L12.5 12.5 L12.5 6" fill="#eaf4ff" stroke="#3a6ea8" stroke-width="1.6"/><path d="M4.6 9.6 L5.1 6.6 L10.6 1.1 L13 3.5 L7.5 9 Z" fill="#3a6ea8"/><path d="M6.2 7 L9.9 3.3" stroke="#eaf4ff" stroke-width="0.7"/></svg>
<div class="abs" style="left:495.5px;top:329.72px;font-size:9.5px;line-height:12px;color:#555">2.1</div>
<div class="abs" style="left:579.7px;top:329.72px;font-size:9.5px;line-height:12px;color:#555">C006</div>
<div class="abs" style="left:621.4px;top:329.72px;font-size:9.5px;line-height:12px;color:#555">Financial Report Request</div>
<div class="abs" style="left:803.2px;top:329.72px;font-size:9.5px;line-height:12px;color:#555">12/28</div>
<div class="abs" style="left:893.4px;top:329.72px;font-size:9.5px;line-height:12px;color:#555">2/16</div>
<div class="abs" style="left:999.7px;top:329.72px;font-size:9.5px;line-height:12px;color:#555">Finance</div>
<div class="abs" style="left:238px;top:363.94px;width:11px;height:11px;border-radius:50%;border:1px solid #858585;background:#fff"></div>
<svg class="abs" style="left:261.5px;top:360.94px" width="14" height="14" viewBox="0 0 14 14"><circle cx="7" cy="7" r="6.5" fill="#dd2a3e"/><path d="M4.4 5.8 L7 8.4 L9.6 5.8" fill="none" stroke="#fff" stroke-width="1.8"/></svg>
<svg class="abs" style="left:395px;top:359.44px" width="14" height="14" viewBox="0 0 14 14"><circle cx="4" cy="4" r="2" fill="none" stroke="#72c060" stroke-width="0.9"/><circle cx="4" cy="4" r="0.6" fill="#72c060"/><path d="M1.5 9 L5 12.3 L12.5 4.5" fill="none" stroke="#58b04c" stroke-width="2.8"/></svg>
<svg class="abs" style="left:434px;top:360.94px" width="10" height="14" viewBox="0 0 10 14"><path d="M5 0.8 C7.4 0.8 9.2 2.6 9.2 4.9 C9.2 6.6 8 7.6 7.3 8.6 L7.1 10 L2.9 10 L2.7 8.6 C2 7.6 0.8 6.6 0.8 4.9 C0.8 2.6 2.6 0.8 5 0.8 Z" fill="#3a7fcc"/><rect x="3" y="11" width="4" height="1.8" fill="#3a7fcc"/></svg>
<svg class="abs" style="left:466.5px;top:360.94px" width="14" height="14" viewBox="0 0 14 14"><path d="M8 1.5 L1.5 1.5 L1.5 12.5 L12.5 12.5 L12.5 6" fill="#eaf4ff" stroke="#3a6ea8" stroke-width="1.6"/><path d="M4.6 9.6 L5.1 6.6 L10.6 1.1 L13 3.5 L7.5 9 Z" fill="#3a6ea8"/><path d="M6.2 7 L9.9 3.3" stroke="#eaf4ff" stroke-width="0.7"/></svg>
<div class="abs" style="left:495.5px;top:361.44px;font-size:9.5px;line-height:12px;color:#555">2.1</div>
<div class="abs" style="left:579.7px;top:361.44px;font-size:9.5px;line-height:12px;color:#555">C007</div>
<div class="abs" style="left:621.4px;top:361.44px;font-size:9.5px;line-height:12px;color:#555">Compliance Review Request</div>
<div class="abs" style="left:803.2px;top:361.44px;font-size:9.5px;line-height:12px;color:#555">11/20</div>
<div class="abs" style="left:893.4px;top:361.44px;font-size:9.5px;line-height:12px;color:#555">2/23</div>
<div class="abs" style="left:999.7px;top:361.44px;font-size:9.5px;line-height:12px;color:#555">Finance</div>
<div class="abs" style="left:238px;top:395.68px;width:11px;height:11px;border-radius:50%;border:1px solid #858585;background:#fff"></div>
<svg class="abs" style="left:261.5px;top:392.68px" width="14" height="14" viewBox="0 0 14 14"><circle cx="7" cy="7" r="6.5" fill="#dd2a3e"/><path d="M4.4 5.8 L7 8.4 L9.6 5.8" fill="none" stroke="#fff" stroke-width="1.8"/></svg>
<svg class="abs" style="left:395px;top:391.18px" width="14" height="14" viewBox="0 0 14 14"><circle cx="4" cy="4" r="2" fill="none" stroke="#72c060" stroke-width="0.9"/><circle cx="4" cy="4" r="0.6" fill="#72c060"/><path d="M1.5 9 L5 12.3 L12.5 4.5" fill="none" stroke="#58b04c" stroke-width="2.8"/></svg>
<svg class="abs" style="left:432.5px;top:392.68px" width="12" height="14" viewBox="0 0 12 14"><path d="M1.5 1.3 L7.2 1.3 L10.5 4.6 L10.5 12.5 L1.5 12.5 Z" fill="#eaf4ff" stroke="#3a6ea8" stroke-width="1.4" stroke-linejoin="miter"/></svg>
<svg class="abs" style="left:466.6px;top:393.18px" width="14" height="14" viewBox="0 0 14 14"><path d="M6.35 1.75 A4.70 4.70 0 0 0 3.86 9.89 M7.65 11.05 A4.70 4.70 0 0 0 10.14 2.91" fill="none" stroke="#2c64a0" stroke-width="2.2"/><path d="M5.79 11.64 L1.39 11.58 L5.28 7.27 Z M8.21 1.16 L12.61 1.22 L8.72 5.53 Z" fill="#2c64a0"/></svg>
<div class="abs" style="left:495.5px;top:393.18px;font-size:9.5px;line-height:12px;color:#555">19</div>
<div class="abs" style="left:579.7px;top:393.18px;font-size:9.5px;line-height:12px;color:#555">C008</div>
<div class="abs" style="left:621.4px;top:393.18px;font-size:9.5px;line-height:12px;color:#555">Installment Plan Request</div>
<div class="abs" style="left:756.8px;top:393.18px;font-size:9.5px;line-height:12px;color:#555">DOC-01</div>
<div class="abs" style="left:803.2px;top:393.18px;font-size:9.5px;line-height:12px;color:#555">2/17</div>
<div class="abs" style="left:893.4px;top:393.18px;font-size:9.5px;line-height:12px;color:#555">1/26</div>
<div class="abs" style="left:999.7px;top:393.18px;font-size:9.5px;line-height:12px;color:#555">Finance</div>
<div class="abs" style="left:238px;top:427.4px;width:11px;height:11px;border-radius:50%;border:1px solid #858585;background:#fff"></div>
<svg class="abs" style="left:261.5px;top:424.4px" width="14" height="14" viewBox="0 0 14 14"><circle cx="7" cy="7" r="6.5" fill="#dd2a3e"/><path d="M4.4 5.8 L7 8.4 L9.6 5.8" fill="none" stroke="#fff" stroke-width="1.8"/></svg>
<svg class="abs" style="left:395px;top:422.9px" width="14" height="14" viewBox="0 0 14 14"><circle cx="4" cy="4" r="2" fill="none" stroke="#72c060" stroke-width="0.9"/><circle cx="4" cy="4" r="0.6" fill="#72c060"/><path d="M1.5 9 L5 12.3 L12.5 4.5" fill="none" stroke="#58b04c" stroke-width="2.8"/></svg>
<svg class="abs" style="left:434px;top:424.4px" width="10" height="14" viewBox="0 0 10 14"><path d="M5 0.8 C7.4 0.8 9.2 2.6 9.2 4.9 C9.2 6.6 8 7.6 7.3 8.6 L7.1 10 L2.9 10 L2.7 8.6 C2 7.6 0.8 6.6 0.8 4.9 C0.8 2.6 2.6 0.8 5 0.8 Z" fill="#3a7fcc"/><rect x="3" y="11" width="4" height="1.8" fill="#3a7fcc"/></svg>
<svg class="abs" style="left:466.5px;top:424.4px" width="14" height="14" viewBox="0 0 14 14"><path d="M8 1.5 L1.5 1.5 L1.5 12.5 L12.5 12.5 L12.5 6" fill="#eaf4ff" stroke="#3a6ea8" stroke-width="1.6"/><path d="M4.6 9.6 L5.1 6.6 L10.6 1.1 L13 3.5 L7.5 9 Z" fill="#3a6ea8"/><path d="M6.2 7 L9.9 3.3" stroke="#eaf4ff" stroke-width="0.7"/></svg>
<div class="abs" style="left:495.5px;top:424.9px;font-size:9.5px;line-height:12px;color:#555">2.1</div>
<div class="abs" style="left:579.7px;top:424.9px;font-size:9.5px;line-height:12px;color:#555">C009</div>
<div class="abs" style="left:621.4px;top:424.9px;font-size:9.5px;line-height:12px;color:#555">Bank Account Update</div>
<div class="abs" style="left:803.2px;top:424.9px;font-size:9.5px;line-height:12px;color:#555">11/21</div>
<div class="abs" style="left:893.4px;top:424.9px;font-size:9.5px;line-height:12px;color:#555">11/22</div>
<div class="abs" style="left:999.7px;top:424.9px;font-size:9.5px;line-height:12px;color:#555">Finance</div>
<div class="abs" style="left:237px;top:561.3px;width:697px;height:5px;border-radius:3px;background:#b8b8b8"></div>
<div class="abs" style="left:233px;top:569.5px;width:834px;height:25.5px;background:#e8e8e8;border:1px solid #dcdcdc"></div>
<div class="abs" style="left:241.5px;top:576px;font-size:9.5px;line-height:12px;color:#3d82c4">Display total number of records</div>
<div class="abs" style="left:967.5px;top:576px;font-size:9.5px;line-height:12px;color:#777">1 - 9</div>
<div class="abs" style="left:996px;top:570px;width:1px;height:25px;background:#d6d6d6"></div>
<div class="abs" style="left:1031px;top:570px;width:1px;height:25px;background:#d6d6d6"></div>
<svg class="abs" style="left:1011px;top:578px" width="5" height="8" viewBox="0 0 5 8"><path d="M4.5 0.5 L0.5 4 L4.5 7.5 Z" fill="#c4c4c4"/></svg>
<svg class="abs" style="left:1047px;top:578px" width="5" height="8" viewBox="0 0 5 8"><path d="M0.5 0.5 L4.5 4 L0.5 7.5 Z" fill="#c4c4c4"/></svg>
<!-- /right panel -->






















</div>
</body></html>
